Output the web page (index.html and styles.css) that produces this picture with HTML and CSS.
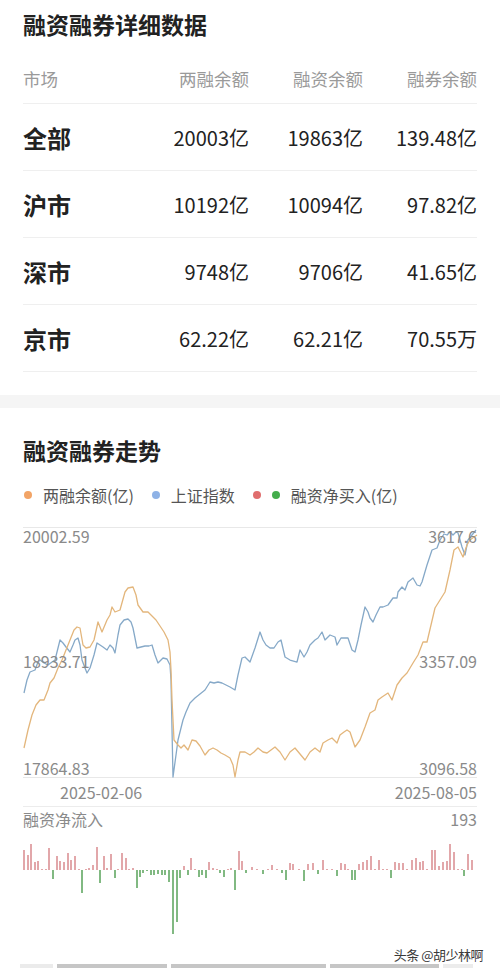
FILE: index.html
```html
<!DOCTYPE html>
<html lang="zh-CN">
<head>
<meta charset="utf-8">
<title>融资融券详细数据</title>
<link rel="stylesheet" href="styles.css">
</head>
<body>
<section class="detail">
  <h1 class="title">融资融券详细数据</h1>
  <div class="thead">
    <span class="c-name">市场</span>
    <span>两融余额</span>
    <span>融资余额</span>
    <span>融券余额</span>
  </div>
  <div class="trow">
    <span class="c-name">全部</span>
    <span>20003亿</span>
    <span>19863亿</span>
    <span>139.48亿</span>
  </div>
  <div class="trow">
    <span class="c-name">沪市</span>
    <span>10192亿</span>
    <span>10094亿</span>
    <span>97.82亿</span>
  </div>
  <div class="trow">
    <span class="c-name">深市</span>
    <span>9748亿</span>
    <span>9706亿</span>
    <span>41.65亿</span>
  </div>
  <div class="trow">
    <span class="c-name">京市</span>
    <span>62.22亿</span>
    <span>62.21亿</span>
    <span>70.55万</span>
  </div>
</section>
<div class="band"></div>
<section class="trend">
  <h2 class="title title-2">融资融券走势</h2>
  <div class="legend">
    <div class="lg-item"><i class="dot dot-orange"></i><span>两融余额(亿)</span></div>
    <div class="lg-item lg-wide"><i class="dot dot-blue"></i><span>上证指数</span></div>
    <div class="lg-item"><i class="dot dot-red"></i><i class="dot dot-green"></i><span>融资净买入(亿)</span></div>
  </div>
  <div class="chart">
    <svg class="lines" viewBox="23 528 454 249" width="454" height="249">
      <polyline class="ln-blue" points="24,693 27,680 30,672 35,670 38,662 40,660 44,663 48,665 52,662 55,660 58,648 60,640 63,643 66,647 70,652 73,645 75,640 78,638 80,645 82,660 85,668 87,673 90,668 94,655 97,643 100,645 103,647 107,650 110,645 113,648 115,653 118,635 120,625 124,620 128,619 131,622 133,628 135,638 137,648 141,647 145,646 149,646 152,645 155,655 158,663 163,658 167,659 170,665 171,680 173,777 176,755 178,740 181,728 183,720 186,712 190,703 195,698 200,694 205,690 210,682 214,683 218,682 222,683 226,685 230,687 235,690 238,675 242,658 245,657 250,662 255,648 260,632 263,640 266,645 270,648 274,648 278,642 281,640 285,657 290,660 297,662 300,650 304,657 307,652 310,645 315,640 318,638 322,632 325,640 328,637 330,635 335,637 337,645 341,638 345,638 348,638 352,650 355,652 358,640 361,625 365,607 368,612 370,618 373,622 376,615 380,607 383,607 388,605 393,598 397,598 398,592 402,587 405,590 408,582 413,578 417,585 420,586 422,582 427,565 432,550 437,548 440,540 444,534 447,535 450,532 453,535 456,532 458,533 462,547 465,555 468,540 472,535 476,530"/>
      <polyline class="ln-orange" points="24,748 28,730 32,715 36,705 40,700 44,700 48,690 50,683 54,678 58,668 62,660 66,650 70,640 74,630 77,627 80,628 83,645 86,648 90,647 94,640 98,622 102,632 107,620 110,615 112,607 115,612 120,610 125,592 128,588 133,587 136,595 138,605 143,612 148,612 152,616 156,620 160,626 164,632 168,640 170,652 171,670 172,700 174,740 178,745 181,748 184,745 188,750 192,740 196,741 200,746 205,755 209,750 213,748 217,750 221,753 225,755 230,758 233,765 235,777 238,760 240,752 245,752 250,755 254,752 258,748 263,752 267,753 271,750 275,747 280,752 285,760 290,752 295,748 300,754 305,760 310,752 315,748 320,752 323,743 328,740 332,738 337,743 340,735 344,732 347,730 350,732 355,747 360,740 365,727 370,713 375,710 378,700 382,697 388,693 392,700 397,685 402,678 407,673 413,663 418,655 423,642 427,642 431,625 435,608 440,600 445,592 450,570 454,550 458,547 463,557 467,545 470,540 474,537 477,535"/>
    </svg>
    <span class="ax ax-l ax-top">20002.59</span>
    <span class="ax ax-l ax-mid">18933.71</span>
    <span class="ax ax-l ax-bot">17864.83</span>
    <span class="ax ax-r ax-top">3617.6</span>
    <span class="ax ax-r ax-mid">3357.09</span>
    <span class="ax ax-r ax-bot">3096.58</span>
  </div>
  <div class="dates">
    <span class="date-first">2025-02-06</span>
    <span>2025-08-05</span>
  </div>
  <div class="flow-head">
    <span>融资净流入</span>
    <span>193</span>
  </div>
  <div class="flow">
    <svg class="bars" viewBox="23 831 454 131" width="454" height="131">
      <path class="bar-red" d="M24 870v-20M28 870v-15M31 870v-26M35 870v-8M38 870v-9M42 870v-1M46 870v-1M49 870v-22M57 870v-14M60 870v-9M64 870v-8M68 870v-17M71 870v-10M75 870v-14M79 870v-1M86 870v-1M89 870v-2M93 870v-5M97 870v-23M104 870v-14M107 870v-2M111 870v-16M118 870v-1M122 870v-17M126 870v-12M129 870v-1M133 870v-2M184 870v-4M191 870v-12M195 870v-1M209 870v-8M213 870v-2M217 870v-1M228 870v-1M231 870v-2M239 870v-19M242 870v-9M252 870v-3M257 870v-1M268 870v-1M272 870v-5M277 870v-1M290 870v-7M293 870v-6M299 870v-1M308 870v-6M313 870v-7M323 870v-10M327 870v-1M332 870v-1M341 870v-7M345 870v-6M348 870v-1M359 870v-6M363 870v-8M367 870v-10M371 870v-14M375 870v-1M379 870v-10M383 870v-1M387 870v-1M395 870v-8M399 870v-7M403 870v-7M407 870v-1M412 870v-10M416 870v-12M420 870v-8M423 870v-9M427 870v-1M432 870v-20M435 870v-20M439 870v-4M443 870v-8M447 870v-9M450 870v-26M454 870v-18M458 870v-1M462 870v-1M468 870v-16M472 870v-10"/>
      <path class="bar-green" d="M53 870v9M82 870v23M100 870v13M115 870v8M137 870v18M140 870v7M143 870v3M147 870v1M151 870v5M154 870v5M158 870v4M162 870v5M165 870v5M169 870v12M173 870v64M177 870v52M180 870v8M188 870v5M199 870v7M202 870v5M206 870v8M220 870v3M224 870v7M235 870v20M246 870v3M263 870v4M282 870v3M286 870v10M304 870v11M318 870v4M337 870v6M352 870v10M355 870v10M391 870v8M464 870v6"/>
    </svg>
    <span class="watermark">头条 @胡少林啊</span>
  </div>
  <div class="scroll">
    <i class="seg seg-a"></i>
    <i class="seg seg-b"></i>
    <i class="seg seg-c"></i>
    <i class="seg seg-d"></i>
    <i class="seg seg-e"></i>
  </div>
</section>
</body>
</html>
```

FILE: styles.css
```css
* { box-sizing: border-box; }

html, body {
  margin: 0;
  padding: 0;
  background: #fff;
}

body {
  width: 500px;
  height: 970px;
  overflow: hidden;
  font-family: "Noto Sans CJK SC", "Noto Sans", sans-serif;
  color: #222;
}

.title {
  margin: 0;
  font-size: 23px;
  font-weight: 700;
  line-height: 32px;
  padding: 8px 0;
  color: #222;
}

.detail {
  padding: 0 23px 23px;
}

.thead,
.trow {
  display: grid;
  grid-template-columns: 1fr 114px 114px 114px;
  text-align: right;
  border-bottom: 1px solid #efefef;
}

.thead {
  padding: 19px 0 12px;
  line-height: 24px;
  font-size: 17.5px;
  color: #9a9a9a;
}

.trow {
  height: 67px;
  align-items: center;
  font-size: 20px;
  color: #222;
}

.c-name {
  text-align: left;
}

.trow .c-name {
  font-size: 24px;
  font-weight: 700;
}

.band {
  height: 13px;
  background: #f5f5f5;
}

.trend {
  padding: 0 23px;
}

.title-2 {
  padding: 26px 0 0;
}

.legend {
  display: flex;
  align-items: center;
  gap: 18px;
  margin-top: 17px;
  line-height: 24px;
  font-size: 16px;
  color: #555;
  margin-left: 1px;
}

.lg-item {
  display: flex;
  align-items: center;
  gap: 11px;
}

.dot {
  display: block;
  width: 8px;
  height: 8px;
  border-radius: 50%;
}

.dot-orange { background: #f2a466; }
.dot-blue { background: #8eb2e6; }
.dot-red { background: #e06e6e; }
.dot-green { background: #44ad4c; }

.chart {
  position: relative;
  margin-top: 20px;
  height: 251px;
  border-top: 1px solid #e8e8e8;
  border-bottom: 1px solid #e8e8e8;
}

.lines {
  position: absolute;
  left: 0;
  top: 0;
  overflow: visible;
}

.lines polyline {
  fill: none;
  stroke-width: 1.3;
  stroke-linejoin: round;
}

.ln-blue { stroke: #86a9c8; }
.ln-orange { stroke: #e3b67c; }

.ax {
  position: absolute;
  font-size: 16px;
  line-height: 18px;
  color: #8a8a8a;
}

.ax-l { left: 0; }
.ax-r { right: 0; }
.ax-top { top: -1px; }
.ax-mid { top: 124px; }
.ax-bot { top: 231px; }

.dates {
  display: flex;
  justify-content: space-between;
  height: 29px;
  line-height: 28px;
  font-size: 16px;
  color: #8a8a8a;
  border-bottom: 1px solid #ececec;
}

.date-first {
  padding-left: 37px;
}

.flow-head {
  display: flex;
  justify-content: space-between;
  line-height: 24px;
  font-size: 16px;
  color: #8a8a8a;
}

.flow {
  position: relative;
  height: 131px;
}

.bars {
  display: block;
}

.bars path {
  fill: none;
  stroke-width: 1.5;
}

.bar-red { stroke: #d98b8f; }
.bar-green { stroke: #58a35a; }

.watermark {
  position: absolute;
  right: -6px;
  top: 116px;
  font-size: 13px;
  line-height: 16px;
  color: #3a3a3a;
  letter-spacing: -0.5px;
  text-shadow: 0 0 2px #fff, 0 0 2px #fff, 0 0 3px #fff;
}

.scroll {
  display: flex;
  margin: 2px 0 0 -3px;
  height: 4px;
}

.seg {
  display: block;
  height: 4px;
  margin-right: 4px;
}

.seg-a { width: 33px; background: #ebebeb; }
.seg-b { width: 112px; background: #c6c6c6; }
.seg-c { width: 156px; background: #c6c6c6; }
.seg-d { width: 111px; background: #c6c6c6; }
.seg-e { width: 30px; background: #ececec; }
```
